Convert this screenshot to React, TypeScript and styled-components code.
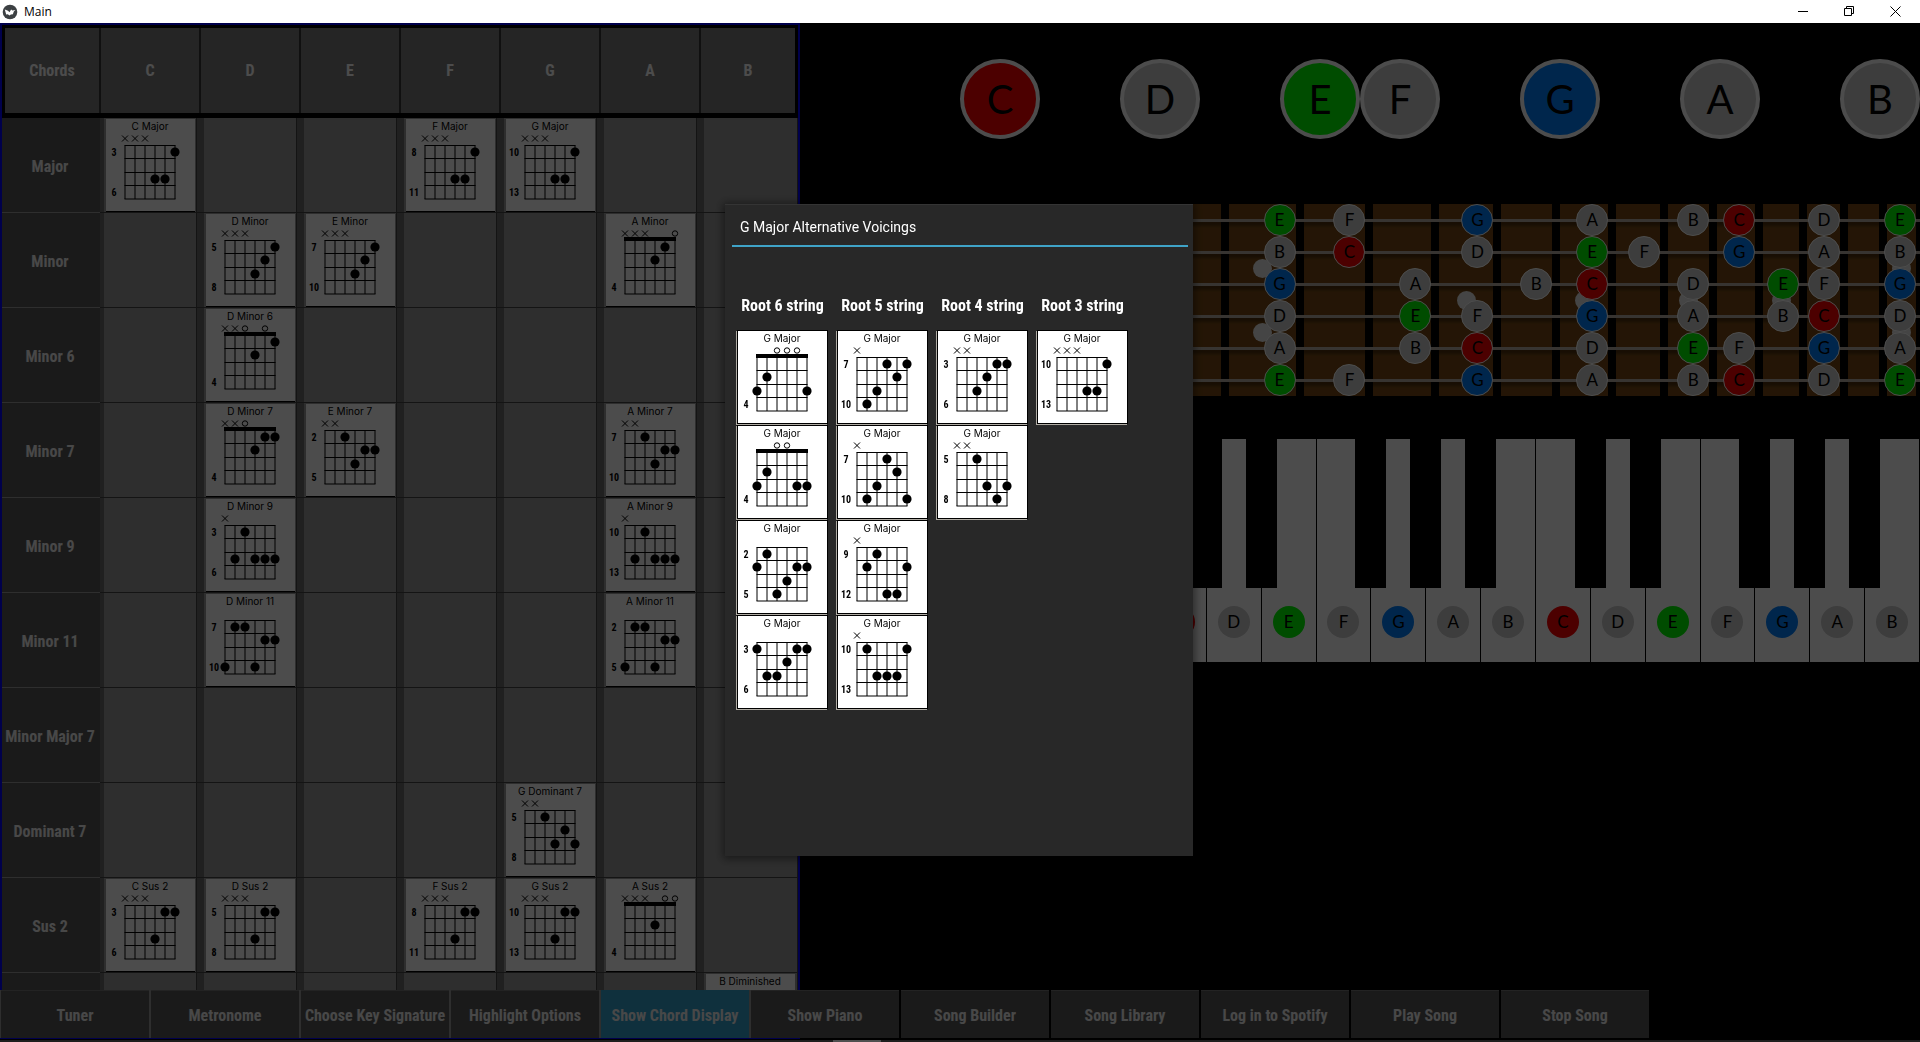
import React from "react";
import styled, { createGlobalStyle, css } from "styled-components";

const condensed = `"Roboto Condensed", "Liberation Sans Narrow", Roboto, sans-serif`;

const GlobalStyle = createGlobalStyle`
  * { box-sizing: border-box; }
  html, body { margin: 0; height: 100%; background: #000; overflow: hidden; }
  button { font: inherit; margin: 0; padding: 0; border: 0; background: none; cursor: pointer; }
`;

/* ---------- window frame ---------- */

const Window = styled.div`
  height: 100vh;
  display: flex;
  flex-direction: column;
  background: #000;
  font-family: Roboto, sans-serif;
`;

const TitleBar = styled.header`
  flex: 0 0 23px;
  display: flex;
  align-items: center;
  gap: 6px;
  padding: 0 2px;
  background: #fff;
  color: #000;
  font: 12px/20px "Open Sans", "Noto Sans", sans-serif;
`;

const AppName = styled.span`
  flex: 1;
`;

const WindowButtons = styled.div`
  display: flex;
`;

const WindowButton = styled.button`
  width: 46px;
  height: 20px;
  display: grid;
  place-items: center;
`;

const Workspace = styled.main`
  flex: 1;
  min-height: 0;
  display: grid;
  grid-template-columns: 5fr 7fr;
`;

/* ---------- chord table ---------- */

const ChordPanel = styled.section`
  min-width: 0;
  overflow: hidden;
  border: solid #00f;
  border-width: 2px 2px 0;
  background: #000;
`;

const ChordTable = styled.table`
  display: block;

  thead, tbody { display: block; }
`;

const HeadRow = styled.tr`
  display: grid;
  grid-template-columns: 94fr repeat(6, 100fr) 96fr;
  height: 93px;
  border: solid #000;
  border-width: 3px 3px 5px;
`;

const ChordRow = styled.tr`
  display: grid;
  grid-template-columns: 98fr repeat(6, 100fr) 98fr;
  height: 95px;
`;

const HeadCell = styled.th`
  display: grid;
  place-items: center;
  border-left: 2px solid #383838;
  background: #7d7d7d;
  color: #fff;
  font: bold 16px/20px ${condensed};

  &:first-child { border-left: 0; }
`;

const RowLabel = styled.th`
  display: grid;
  place-items: center;
  padding: 3px 2px 0 0;
  border-bottom: 1px solid #999;
  background: #575757;
  color: #f0f0f0;
  font: bold 16px/20px ${condensed};
  white-space: nowrap;
`;

const ChordCell = styled.td`
  padding: 0 3px 0 4px;
  border-bottom: 1px solid #444;
  background: #6b6b6b;

  &:last-child { padding-right: 0; }
`;

const Slot = styled.div`
  height: 100%;
  padding: 1px 0 0 2px;
  border-right: 1px solid #444;
  background: #999;
`;

const ChordButton = styled.button<{ $framed?: boolean }>`
  display: block;
  background: #fff;
  border-bottom: 1px solid #000;
  ${(p) =>
    p.$framed &&
    css`
      border: 1px solid #000;
      box-shadow: -1px 1px 0 #b0aca4;
    `}

  svg { display: block; }
`;

/* ---------- instruments ---------- */

const Instruments = styled.section`
  min-width: 0;
  overflow: hidden;
  padding-top: 36px;
`;

const ScaleRow = styled.div`
  display: grid;
  grid-template-columns: repeat(14, 1fr);
`;

const noteFill: Record<string, string> = { C: "#ff0000", E: "#00ff00", G: "#0080ff" };

const ScaleNote = styled.span<{ $note: string; $column: number }>`
  grid-column: ${(p) => p.$column};
  aspect-ratio: 1;
  display: grid;
  place-items: center;
  border: 4px solid #fff;
  border-radius: 50%;
  background: ${(p) => noteFill[p.$note] ?? "#cccccc"};
  color: #000;
  font: 40px/40px Lato, sans-serif;
`;

const Fretboard = styled.div`
  position: relative;
  display: grid;
  gap: 8px;
  margin-top: 65px;
  padding-right: 4px;
  height: 192px;

  &::before {
    content: "";
    position: absolute;
    inset: 0;
    background: repeating-linear-gradient(
      #0000 0 15px, #b8b0a6 15px 18px, #0005 18px 20px, #0000 24px 32px
    );
  }
`;

const Fret = styled.div`
  display: grid;
  grid-template-columns: minmax(0, 1fr);
  grid-template-rows: repeat(6, 32px);
  justify-items: end;
  min-width: 0;
  background: #784914;
`;

const FretNote = styled.span<{ $note: string; $row: number }>`
  position: relative;
  grid-row: ${(p) => p.$row};
  grid-column: 1;
  width: 32px;
  height: 32px;
  display: grid;
  place-items: center;
  border: 1px solid #fff;
  border-radius: 50%;
  background: ${(p) => noteFill[p.$note] ?? "#cccccc"};
  color: #000;
  font: 17px/20px Lato, sans-serif;
`;

const Inlay = styled.i<{ $row: number }>`
  position: relative;
  grid-row: ${(p) => p.$row} / span 2;
  grid-column: 1;
  place-self: center;
  width: 19px;
  height: 19px;
  border-radius: 50%;
  background: #e6e6e6;
`;

const Piano = styled.div`
  display: grid;
  grid-template-columns: repeat(21, 1fr);
  height: 223px;
  margin: 43px 0 0 -32px;
`;

const WhiteKey = styled.button`
  position: relative;
  display: flex;
  align-items: flex-end;
  justify-content: center;
  padding-bottom: 24px;
  border-right: 1px solid #000;
  background: #fff;
`;

const BlackKey = styled.span`
  position: absolute;
  z-index: 1;
  top: 0;
  right: -16px;
  width: 31px;
  height: 149px;
  background: #000;
`;

const KeyNote = styled.span<{ $note: string }>`
  width: 32px;
  height: 32px;
  display: grid;
  place-items: center;
  border-radius: 50%;
  background: ${(p) => noteFill[p.$note] ?? "#cccccc"};
  color: #000;
  font: 17px/20px Lato, sans-serif;
`;

/* ---------- toolbar ---------- */

const Toolbar = styled.nav`
  flex: 0 0 49px;
  display: flex;
  gap: 2px;
  padding: 0 1px 1px;
  background:
    linear-gradient(to right, #00f 41.67%, #000 0) bottom / 100% 1px no-repeat,
    linear-gradient(to right, #999 41.67%, #000 0);
`;

const ToolButton = styled.button<{ $active?: boolean }>`
  flex: 0 1 148px;
  padding-top: 2px;
  border-top: 1px solid ${(p) => (p.$active ? "#32a0ce" : "#777")};
  background: ${(p) => (p.$active ? "#32a0ce" : "#585858")};
  color: #f0f0f0;
  font: bold 16px/20px ${condensed};
  white-space: nowrap;
`;

const DesktopEdge = styled.div`
  flex: 0 0 3px;
  border-top: 1px solid #000;
  background: linear-gradient(to right, #1e1e1e 833px, #4f4f4f 833px 881px, #1e1e1e 881px);
`;

/* ---------- popup ---------- */

const Backdrop = styled.div`
  position: fixed;
  z-index: 5;
  inset: 23px 0 3px;
  display: grid;
  place-items: center;
  padding: 0 2px 2px 0;
  background: rgba(0, 0, 0, 0.7);
`;

const Popup = styled.section`
  width: 468px;
  height: 652px;
  padding: 0 5px 0 7px;
  border-top: 1px solid #343434;
  background: #282828;
  box-shadow: 0 1px 8px 2px rgba(0, 0, 0, 0.45);
`;

const PopupTitle = styled.h2`
  margin: 0;
  padding: 12px 8px 8px;
  border-bottom: 2px solid #3fa3c8;
  color: #fff;
  font: 14px/20px Roboto, sans-serif;
`;

const Voicings = styled.div`
  display: grid;
  grid-template-columns: repeat(4, 91px);
  gap: 9px;
  padding: 48px 5px 0;
`;

const VoicingColumn = styled.div`
  display: flex;
  flex-direction: column;
  align-items: flex-start;
  gap: 1px;
`;

const VoicingHeading = styled.h3`
  align-self: center;
  margin: 0 0 12px;
  color: #fff;
  font: bold 16px/22px ${condensed};
  white-space: nowrap;
`;

/* ---------- chord diagram ---------- */

type Shape = {
  name: string;
  /** First fret number; left out when the nut is shown. */
  from?: number;
  /** Last fret number. */
  to?: number;
  /** Markers over the strings, one character per string. */
  marks?: string;
  /** [string 0-5, fret row 0-3] */
  dots: [number, number][];
};

const stringX = (s: number) => 19 + s * 10;
const fretY = [26.5, 39.5, 53.5, 66.5, 80];
const dotY = [33, 46, 60, 73];

function Diagram({ shape }: { shape: Shape }) {
  const open = shape.from === undefined;
  return (
    <svg width="89" height="92" viewBox="0 0 89 92" role="img" aria-label={shape.name}>
      <g stroke="#000" strokeWidth="1" fill="none">
        {[0, 1, 2, 3, 4, 5].map((s) => (
          <path key={s} d={`M${stringX(s)} 26.5V80`} />
        ))}
        {fretY.map((y) => (
          <path key={y} d={`M18.5 ${y}H69.5`} />
        ))}
        {[...(shape.marks ?? "")].map((m, s) => {
          const x = stringX(s);
          if (m === "x") return <path key={s} d={`M${x - 3} 16.5l6 6m0 -6l-6 6`} />;
          if (m === "o") return <circle key={s} cx={x} cy="19.5" r="2.7" />;
          return null;
        })}
      </g>
      {open && <rect x="18" y="23" width="52" height="4" />}
      {shape.dots.map(([s, f]) => (
        <circle key={`${s}-${f}`} cx={stringX(s)} cy={dotY[f]} r="4.6" />
      ))}
      <text x="44" y="11" textAnchor="middle" fontFamily="Inter, sans-serif" fontSize="10">
        {shape.name}
      </text>
      <g fontFamily={condensed} fontSize="10" fontWeight="bold" textAnchor="middle">
        {!open && <text x="8" y="37">{shape.from}</text>}
        {shape.to && <text x="8" y="77">{shape.to}</text>}
      </g>
    </svg>
  );
}

/* ---------- data ---------- */

const roots = ["C", "D", "E", "F", "G", "A", "B"];

const triad: [number, number][] = [[5, 0], [3, 2], [4, 2]];
const minor: [number, number][] = [[5, 0], [4, 1], [3, 2]];
const sus: [number, number][] = [[4, 0], [5, 0], [3, 2]];
const seventh: [number, number][] = [[2, 0], [4, 1], [5, 1], [3, 2]];
const ninth: [number, number][] = [[2, 0], [1, 2], [3, 2], [4, 2], [5, 2]];
const eleventh: [number, number][] = [[1, 0], [2, 0], [4, 1], [5, 1], [0, 3], [3, 3]];

const rows: { label: string; chords: Record<string, Shape> }[] = [
  {
    label: "Major",
    chords: {
      C: { name: "C Major", from: 3, to: 6, marks: "xxx", dots: triad },
      F: { name: "F Major", from: 8, to: 11, marks: "xxx", dots: triad },
      G: { name: "G Major", from: 10, to: 13, marks: "xxx", dots: triad },
    },
  },
  {
    label: "Minor",
    chords: {
      D: { name: "D Minor", from: 5, to: 8, marks: "xxx", dots: minor },
      E: { name: "E Minor", from: 7, to: 10, marks: "xxx", dots: minor },
      A: { name: "A Minor", to: 4, marks: "xxx  o", dots: [[4, 0], [3, 1]] },
    },
  },
  {
    label: "Minor 6",
    chords: { D: { name: "D Minor 6", to: 4, marks: "xxo o ", dots: [[5, 0], [3, 1]] } },
  },
  {
    label: "Minor 7",
    chords: {
      D: { name: "D Minor 7", to: 4, marks: "xxo", dots: [[4, 0], [5, 0], [3, 1]] },
      E: { name: "E Minor 7", from: 2, to: 5, marks: "xx", dots: seventh },
      A: { name: "A Minor 7", from: 7, to: 10, marks: "xx", dots: seventh },
    },
  },
  {
    label: "Minor 9",
    chords: {
      D: { name: "D Minor 9", from: 3, to: 6, marks: "x", dots: ninth },
      A: { name: "A Minor 9", from: 10, to: 13, marks: "x", dots: ninth },
    },
  },
  {
    label: "Minor 11",
    chords: {
      D: { name: "D Minor 11", from: 7, to: 10, dots: eleventh },
      A: { name: "A Minor 11", from: 2, to: 5, dots: eleventh },
    },
  },
  { label: "Minor Major 7", chords: {} },
  {
    label: "Dominant 7",
    chords: {
      G: { name: "G Dominant 7", from: 5, to: 8, marks: "xx", dots: [[2, 0], [4, 1], [3, 2], [5, 2]] },
    },
  },
  {
    label: "Sus 2",
    chords: {
      C: { name: "C Sus 2", from: 3, to: 6, marks: "xxx", dots: sus },
      D: { name: "D Sus 2", from: 5, to: 8, marks: "xxx", dots: sus },
      F: { name: "F Sus 2", from: 8, to: 11, marks: "xxx", dots: sus },
      G: { name: "G Sus 2", from: 10, to: 13, marks: "xxx", dots: sus },
      A: { name: "A Sus 2", to: 4, marks: "xxx oo", dots: [[3, 1]] },
    },
  },
  { label: "", chords: { B: { name: "B Diminished", dots: [] } } },
];

const g = (dots: [number, number][], to: number, from?: number, marks?: string): Shape => ({
  name: "G Major", dots, to, from, marks,
});

const voicings: { title: string; shapes: Shape[] }[] = [
  {
    title: "Root 6 string",
    shapes: [
      g([[1, 1], [0, 2], [5, 2]], 4, undefined, "  ooo"),
      g([[1, 1], [0, 2], [4, 2], [5, 2]], 4, undefined, "  oo"),
      g([[1, 0], [0, 1], [4, 1], [5, 1], [3, 2], [2, 3]], 5, 2),
      g([[0, 0], [4, 0], [5, 0], [3, 1], [1, 2], [2, 2]], 6, 3),
    ],
  },
  {
    title: "Root 5 string",
    shapes: [
      g([[3, 0], [5, 0], [4, 1], [2, 2], [1, 3]], 10, 7, "x"),
      g([[3, 0], [4, 1], [2, 2], [1, 3], [5, 3]], 10, 7, "x"),
      g([[2, 0], [1, 1], [5, 1], [3, 3], [4, 3]], 12, 9, "x"),
      g([[1, 0], [5, 0], [2, 2], [3, 2], [4, 2]], 13, 10, "x"),
    ],
  },
  {
    title: "Root 4 string",
    shapes: [
      g([[4, 0], [5, 0], [3, 1], [2, 2]], 6, 3, "xx"),
      g([[2, 0], [3, 2], [5, 2], [4, 3]], 8, 5, "xx"),
    ],
  },
  { title: "Root 3 string", shapes: [g([[5, 0], [3, 2], [4, 2]], 13, 10, "xxx")] },
];

const scale: [string, number][] = [
  ["C", 3], ["D", 5], ["E", 7], ["F", 8], ["G", 10], ["A", 12], ["B", 14],
];

/* One entry per fret: relative width, notes from the first to the sixth string, inlay rows. */
const frets: { width: number; notes: string; inlays?: number[] }[] = [
  { width: 81, notes: "" },
  { width: 80, notes: "" },
  { width: 79, notes: "" },
  { width: 78, notes: "" },
  { width: 71, notes: "" },
  { width: 67, notes: "EBGDAE", inlays: [2, 4] },
  { width: 62, notes: "FC   F" },
  { width: 58, notes: "  AEB " },
  { width: 54, notes: "GD FCG", inlays: [3] },
  { width: 51, notes: "  B   " },
  { width: 48, notes: "AECGDA", inlays: [3] },
  { width: 44, notes: " F    " },
  { width: 41, notes: "B DAEB", inlays: [3] },
  { width: 38, notes: "CG  FC" },
  { width: 36, notes: "  EB  ", inlays: [3] },
  { width: 33, notes: "DAFCGD" },
  { width: 31, notes: "" },
  { width: 29, notes: "EBGDAE", inlays: [2, 4] },
];

const fretColumns = frets.map((f) => `${f.width}fr`).join(" ");

const tools = [
  "Tuner", "Metronome", "Choose Key Signature", "Highlight Options", "Show Chord Display",
  "Show Piano", "Song Builder", "Song Library", "Log in to Spotify", "Play Song", "Stop Song",
];

/* ---------- parts ---------- */

function Logo() {
  return (
    <svg width="16" height="16" viewBox="0 0 16 16" aria-hidden="true">
      <circle cx="8" cy="8" r="7.3" fill="#3c4043" />
      <path d="M2.8 5.6l3.2 1.2 1.5 1.4 1.6-2.6 1.3.9 3-.5-1.6 1.6-.9 2.6-2 .2-1.4 1-1.7-1.2-1.6.2z" fill="#fff" />
    </svg>
  );
}

function ChordGrid() {
  return (
    <ChordPanel>
      <ChordTable>
        <thead>
          <HeadRow>
            <HeadCell scope="col">Chords</HeadCell>
            {roots.map((r) => (
              <HeadCell key={r} scope="col">{r}</HeadCell>
            ))}
          </HeadRow>
        </thead>
        <tbody>
          {rows.map((row) => (
            <ChordRow key={row.label}>
              <RowLabel scope="row">{row.label}</RowLabel>
              {roots.map((r) => (
                <ChordCell key={r}>
                  <Slot>
                    {row.chords[r] && (
                      <ChordButton>
                        <Diagram shape={row.chords[r]} />
                      </ChordButton>
                    )}
                  </Slot>
                </ChordCell>
              ))}
            </ChordRow>
          ))}
        </tbody>
      </ChordTable>
    </ChordPanel>
  );
}

function FretboardView() {
  return (
    <Fretboard style={{ gridTemplateColumns: fretColumns }}>
      {frets.map((fret, i) => (
        <Fret key={i}>
          {fret.inlays?.map((row) => <Inlay key={row} $row={row} />)}
          {[...fret.notes].map((n, s) =>
            n === " " ? null : (
              <FretNote key={s} $note={n} $row={s + 1}>{n}</FretNote>
            )
          )}
        </Fret>
      ))}
    </Fretboard>
  );
}

function PianoView() {
  return (
    <Piano>
      {[0, 1, 2].flatMap((octave) =>
        roots.map((n, i) => (
          <WhiteKey key={`${n}${octave}`} aria-label={`${n}${octave + 3}`}>
            {octave + i > 0 && <KeyNote $note={n}>{n}</KeyNote>}
            {n !== "E" && n !== "B" && <BlackKey />}
          </WhiteKey>
        ))
      )}
    </Piano>
  );
}

export default function App() {
  return (
    <Window>
      <GlobalStyle />
      <TitleBar>
        <Logo />
        <AppName>Main</AppName>
        <WindowButtons>
          <WindowButton aria-label="Minimize">
            <svg width="11" height="11" fill="none" stroke="#000"><path d="M0 5.5h10" /></svg>
          </WindowButton>
          <WindowButton aria-label="Restore">
            <svg width="11" height="11" fill="none" stroke="#000"><path d="M.5 2.5h7v7h-7zM2.5 2.5v-2h7v7h-2" /></svg>
          </WindowButton>
          <WindowButton aria-label="Close">
            <svg width="11" height="11" fill="none" stroke="#000"><path d="M.5 .5l10 10m0-10l-10 10" /></svg>
          </WindowButton>
        </WindowButtons>
      </TitleBar>
      <Workspace>
        <ChordGrid />
        <Instruments>
          <ScaleRow>
            {scale.map(([n, column]) => (
              <ScaleNote key={n} $note={n} $column={column}>{n}</ScaleNote>
            ))}
          </ScaleRow>
          <FretboardView />
          <PianoView />
        </Instruments>
      </Workspace>
      <Toolbar>
        {tools.map((t) => (
          <ToolButton key={t} $active={t === "Show Chord Display"}>{t}</ToolButton>
        ))}
      </Toolbar>
      <DesktopEdge />
      <Backdrop>
        <Popup role="dialog" aria-labelledby="popup-title">
          <PopupTitle id="popup-title">G Major Alternative Voicings</PopupTitle>
          <Voicings>
            {voicings.map((v) => (
              <VoicingColumn key={v.title}>
                <VoicingHeading>{v.title}</VoicingHeading>
                {v.shapes.map((s, i) => (
                  <ChordButton key={i} $framed>
                    <Diagram shape={s} />
                  </ChordButton>
                ))}
              </VoicingColumn>
            ))}
          </Voicings>
        </Popup>
      </Backdrop>
    </Window>
  );
}
